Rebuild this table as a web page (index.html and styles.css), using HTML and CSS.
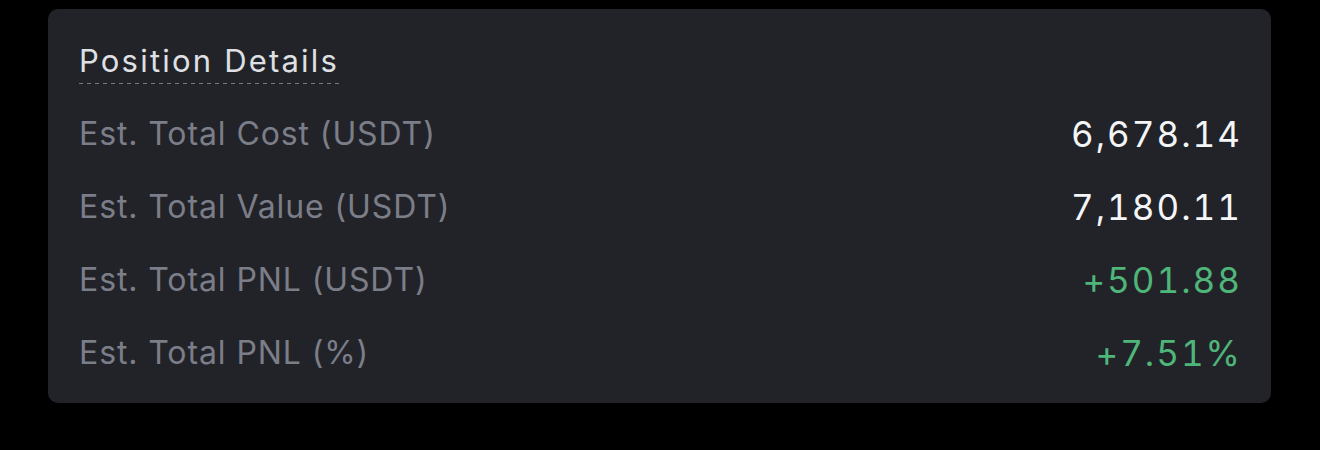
FILE: index.html
```html
<!DOCTYPE html>
<html lang="en">
<head>
    <meta charset="UTF-8">
    <title>Position Details</title>
    <link rel="stylesheet" href="styles.css">
</head>
<body>
    <div class="card">
        <h2 class="card-title"><span>Position Details</span></h2>
        <div class="row">
            <span class="label">Est. Total Cost (USDT)</span>
            <span class="value">6,678.14</span>
        </div>
        <div class="row">
            <span class="label">Est. Total Value (USDT)</span>
            <span class="value">7,180.11</span>
        </div>
        <div class="row">
            <span class="label">Est. Total PNL (USDT)</span>
            <span class="value up">+501.88</span>
        </div>
        <div class="row">
            <span class="label">Est. Total PNL (%)</span>
            <span class="value up">+7.51%</span>
        </div>
    </div>
</body>
</html>
```

FILE: styles.css
```css
body {
    margin: 0;
    background: #000000;
    font-family: Inter, "Noto Sans", sans-serif;
    padding: 9px 49px 0 48px;
}
.card {
    background-color: #222329;
    border-radius: 10px;
    padding: 33px 31px 20px 31px;
    height: 341px;
}
.card-title {
    margin: 0 0 17px 0;
    font-size: 31px;
    font-weight: 400;
    letter-spacing: 2.2px;
    color: #dfe0e4;
    line-height: 38px;
    height: 38px;
}
/* subrayado punteado del titulo */
.card-title span {
    display: inline-block;
    line-height: 38px;
    margin-right: -2px;
    background-image: linear-gradient(to right, #767982 50%, transparent 50%);
    background-size: 8px 1px;
    background-repeat: repeat-x;
    background-position: 0 41px;
    height: 42px;
}
.row {
    display: flex;
    justify-content: space-between;
    align-items: center;
    height: 73px;
}
.label {
    font-size: 32px;
    letter-spacing: 0.9px;
    color: #7b7e88;
}
.value {
    font-size: 35px;
    letter-spacing: 2px;
    margin-right: -2px;
    font-variant-numeric: tabular-nums;
    color: #f4f5f7;
}
.value.up {
    color: #4fb679;
}
```
